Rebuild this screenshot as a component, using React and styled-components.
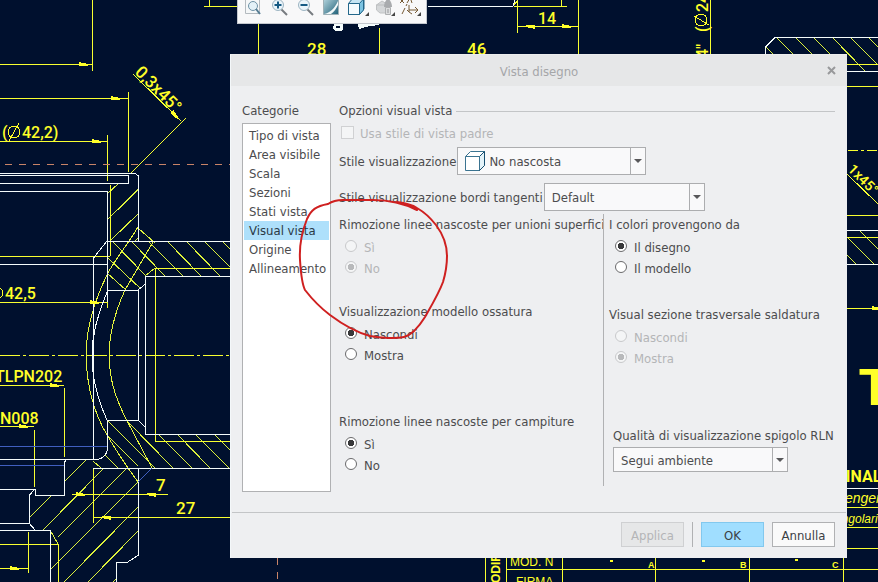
import React, { useState } from "react";
import styled, { createGlobalStyle } from "styled-components";

const GlobalStyle = createGlobalStyle`
  * {
    box-sizing: border-box;
  }
  body {
    margin: 0;
    overflow: hidden;
    background-color: #00102e;
    font-family: "DejaVu Sans Condensed", "Noto Sans", sans-serif;
    font-size: 13px;
    line-height: 20px;
    color: #4c4c4e;
  }
`;

const Page = styled.main`
  position: relative;
  min-height: 100vh;
  padding: 0 31px 24px 230px;
`;

const Sheet = styled.svg`
  position: absolute;
  top: 0;
  left: 0;
  width: 100%;
  height: 100%;
  font-family: Roboto, "Liberation Sans", sans-serif;
  shape-rendering: crispEdges;
`;

const Toolbar = styled.div`
  position: relative;
  display: flex;
  gap: 4px;
  width: max-content;
  height: 24px;
  margin-left: 7px;
  padding: 0 5px;
  background-color: #f8f8f9;
  border: 1px solid #c4c8ce;
  border-top: 0;
`;

const ToolButton = styled.button`
  width: 22px;
  height: 18px;
  padding: 0;
  border: 0;
  background: none;
  svg {
    display: block;
  }
`;

const Dialog = styled.section`
  position: relative;
  margin-top: 30px;
  background-color: #eeeff1;
  border-left: 1px solid #f4f8fa;
  border-top: 1px solid #eceded;
`;

const TitleBar = styled.header`
  display: grid;
  grid-template-columns: 20px 1fr 20px;
  align-items: center;
  height: 31px;
  padding: 0 6px;
  background-color: #e6e7e8;
`;

const Title = styled.h1`
  margin: 0;
  padding-top: 2px;
  font-size: 13px;
  font-weight: 400;
  text-align: center;
  color: #a5a6a8;
`;

const CloseButton = styled.button`
  display: flex;
  justify-content: center;
  padding: 0;
  border: 0;
  background: none;
`;

const Body = styled.div`
  display: flex;
  gap: 8px;
  padding: 15px 12px 20px 11px;
`;

const Categories = styled.div`
  display: flex;
  flex-direction: column;
  flex: none;
  width: 89px;
`;

const CategoryList = styled.ul`
  flex: 1;
  margin: 2px 0 0;
  padding: 2px 1px;
  list-style: none;
  background-color: #fff;
  border: 1px solid #b0b1b3;
`;

const Category = styled.button`
  display: block;
  width: 100%;
  height: 19px;
  padding: 0 0 0 5px;
  border: 0;
  font: inherit;
  line-height: 19px;
  text-align: left;
  white-space: nowrap;
  color: ${(props) => (props.$active ? "#2a3a46" : "#4c4c4e")};
  background-color: ${(props) => (props.$active ? "#aee0fb" : "#fff")};
`;

const Options = styled.div`
  flex: 1;
  min-width: 0;
  padding-bottom: 6px;
`;

const OptionsTitle = styled.h2`
  display: flex;
  align-items: center;
  gap: 4px;
  margin: 0;
  font-size: 13px;
  font-weight: 400;
  &::after {
    content: "";
    flex: 1;
    height: 1px;
    background-color: #c3c5c7;
  }
`;

const CheckRow = styled.label`
  display: flex;
  align-items: center;
  gap: 6px;
  height: 26px;
  padding: 0 0 1px 2px;
  color: #b4b5b7;
`;

const Checkbox = styled.input`
  appearance: none;
  width: 13px;
  height: 13px;
  margin: 0 0 2px;
  border: 1px solid #d0d1d3;
  background-color: #f4f5f6;
`;

const Fields = styled.div`
  display: grid;
  gap: 8px;
  padding-bottom: 3px;
`;

const FieldRow = styled.div`
  display: flex;
  align-items: center;
  gap: 1px;
  white-space: nowrap;
  label {
    padding-top: 2px;
  }
`;

const SelectBox = styled.div`
  position: relative;
  width: ${(props) => props.$width}px;
  height: ${(props) => props.$height || 28}px;
`;

const Select = styled.select`
  appearance: none;
  width: 100%;
  height: 100%;
  padding: 2px 20px 0 ${(props) => (props.$icon ? 31 : 7)}px;
  border: 1px solid #acadaf;
  border-radius: 0;
  font: inherit;
  color: #4c4c4e;
  background-color: #f9f9fa;
`;

const SelectArrow = styled.span`
  position: absolute;
  top: 1px;
  right: 1px;
  bottom: 1px;
  display: flex;
  align-items: center;
  justify-content: center;
  width: 15px;
  border-left: 1px solid #acadaf;
  pointer-events: none;
`;

const SelectIcon = styled.span`
  position: absolute;
  top: 3px;
  left: 7px;
  pointer-events: none;
`;

const Columns = styled.div`
  display: grid;
  grid-template-columns: 264px 1fr;
`;

const Column = styled.div`
  padding-left: ${(props) => (props.$divided ? 5 : 0)}px;
  border-left: ${(props) => (props.$divided ? "1px solid #b0b1b3" : "0")};
  white-space: nowrap;
`;

const Group = styled.fieldset`
  min-width: 0;
  min-height: ${(props) => props.$space}px;
  margin: 0;
  padding: 0;
  border: 0;
`;

const Legend = styled.legend`
  padding: 1px 0;
`;

const RadioRow = styled.label`
  display: flex;
  align-items: center;
  gap: 7px;
  width: max-content;
  height: 21px;
  padding: 2px 0 0 6px;
  color: ${(props) => (props.$disabled ? "#b4b5b7" : "#4c4c4e")};
`;

const Radio = styled.input`
  appearance: none;
  width: 12px;
  height: 12px;
  margin: 0 0 3px;
  border: 1px solid #6a6a6c;
  border-radius: 50%;
  background-color: #fff;
  &:checked {
    background-image: radial-gradient(circle, #38383a 2px, #38383a 3px, #fff 3px);
  }
  &:disabled {
    border-color: #c8c9cb;
    background-color: #f4f5f6;
  }
  &:disabled:checked {
    background-image: radial-gradient(circle, #b8b9bb 2px, #b8b9bb 3px, #f4f5f6 3px);
  }
`;

const QualityField = styled.div`
  display: flex;
  flex-direction: column;
  gap: 1px;
  padding: 1px 0 0 4px;
`;

const Footer = styled.footer`
  display: flex;
  justify-content: flex-end;
  align-items: center;
  gap: 8px;
  margin: 0 1px;
  padding: 9px 11px 11px;
  border-top: 1px solid #c3c5c7;
`;

const Button = styled.button`
  width: 63px;
  height: 25px;
  padding: 2px 0 0;
  border: 1px solid ${(props) => (props.$primary ? "#82c8ee" : "#b0b1b3")};
  font: inherit;
  color: #3c4045;
  background-color: ${(props) => (props.$primary ? "#a0deff" : "#fafafa")};
  &:disabled {
    color: #b4b5b7;
    border-color: #cfd0d2;
    background-color: #e6e7e8;
  }
`;

const Separator = styled.span`
  width: 1px;
  height: 25px;
  background-color: #b0b1b3;
`;

const Markup = styled.svg`
  position: absolute;
  top: 140px;
  left: 63px;
  pointer-events: none;
`;

const categories = [
  "Tipo di vista",
  "Area visibile",
  "Scala",
  "Sezioni",
  "Stati vista",
  "Visual vista",
  "Origine",
  "Allineamento",
];

const Arrow = ({ x, y, flip, angle = 0 }) => (
  <path
    d="M0 0 L-5 -1 L-12 -2.5 V2 L-5 1.5 Z"
    fill="#ffff28"
    transform={`translate(${x} ${y}) rotate(${flip ? 180 : angle})`}
  />
);

const Drawing = () => (
  <Sheet viewBox="0 0 878 582" preserveAspectRatio="xMinYMin slice" aria-hidden="true">
    <rect width="878" height="582" fill="#00102e" />

    {/* section hatching */}
    <path
      fill="none"
      stroke="#dcf03c"
      d="M107 194L118 184M127 200L138 189M108 219L138 190M111 240L138 214M135 241L138 238
        M138 228L155 243M112 241L146 276M131 241L165 276M148 241L183 276M167 241L201 276M186 241L220 276M204 241L230 267M222 241L230 249
        M108 258L141 289M107 273L126 290M145 276L155 268
        M107 420L155 468M127 421L173 468M158 434L192 468M177 434L210 468M195 434L229 468M214 434L230 450M107 435L138 466M105 455L118 468M93 461L101 468
        M64 482L87 459M29 518L51 496M43 530L104 468M58 537L127 468M50 570L138 482M64 582L138 507M88 582L138 531M113 582L117 578M50 530L58 544
        M766 47L773 54M777 38L793 54M795 37L812 54M813 37L830 54M832 37L865 71M850 37L878 65M868 37L878 47
        M847 237L874 264M859 230L878 249M847 255L856 264"
    />
    <path
      fill="none"
      stroke="#e6f53c"
      d="M138 227C126 247 114 261 108 273C94 301 86 330 86 356C87 394 97 418 107 435C118 454 130 471 138 482
        M153 242L125 290C115 312 109 334 109 357C110 384 117 400 125 417L152 468"
    />

    {/* dimension and auxiliary lines */}
    <path
      fill="none"
      stroke="#f8ff30"
      d="M92.500 0V71M0 64.500H92M0 98.500H128M128.500 92V172M0 141.500H107M107.500 135V181M204 6.500H237M209.500 0V6
        M133 74L181 121M186 118L130 174
        M110.500 185V256M0 256.500H110M0 302.500H107M107.500 285V308M155.500 268V441M155 268.500H230M155 441.500H230
        M0 385.500H64M64.500 388V457M0 426.500H34M34.500 430V487M72 494.500H168M93 517.500H230M93.500 468V523
        M0 544.500H58M58.500 544V582M0 568.500H28M28.500 532V573
        M258.500 23V54M379.500 28V54M517.500 0V33M517 26.500H578M578.500 0V54M514 6.500H567M561.500 0V6M513 6L518 0M710.500 0V54
        M847 64.500H878M847 86.500H878M847 174L878 204M847 215.500H878M847 237.500H878M847 308.500H878
        M847 507.500H878M847 527.500H878M847 548.500H878
        M506 569.500H878M485.500 558V582M506.500 558V582M562.500 558V582M655.500 558V582M749.500 558V582M843.500 558V582"
    />
    <path stroke="#f8ff30" strokeDasharray="20 3 3 3" d="M0 355.500H230" />
    <path stroke="#f8ff30" strokeDasharray="10 3 3 3" d="M848 150.500H878" />
    <path stroke="#c98468" strokeDasharray="7 7" fill="none" d="M5 164.500H230M277.500 558V582" />

    {/* part outline */}
    <path
      fill="none"
      stroke="#f4fbfb"
      d="M0 173.500H135L138.500 176V241M0 175.500H128.500V183.500H0M0 191.500H107.500V241
        M107.500 241.500H230M107 241L93.500 258V459M0 264.500H107M107.500 241V302M107 290.500H138.500V420.500H107.500V450Q106 457 98 459.500H0
        M138 290L145.500 284M230 276.500H145.500V434.500H230M138 420L145 427
        M107 292C96 320 92 336 92 356C92 380 98 400 107 420
        M93 468.500H230M138.500 468V555L127 562.500H116.500V582
        M67 459L64.500 462V495.500H35V489.500H0M35 489L29.500 495V523.500H0M29 523L35 530M0 530.500H50.500V582
        M428 6.500H513L515 0M765.500 54V47L775 37.500H878M847 71.500H878M847 230.500H878M847 264.500H878M847 488.500H878"
    />
    <path fill="none" stroke="#405fc0" d="M0 446.500H107M0 465.500H64M152 468L138 482" />

    <Arrow x={91} y={64.5} />
    <Arrow x={123} y={98.5} />
    <Arrow x={104} y={141.5} />
    <Arrow x={180} y={120} angle={45} />
    <Arrow x={102} y={302.5} />
    <Arrow x={62} y={385.5} />
    <Arrow x={31} y={426.5} />
    <Arrow x={88} y={494.5} />
    <Arrow x={144} y={494.5} flip />
    <Arrow x={99} y={517.5} flip />
    <Arrow x={22} y={568.5} />
    <Arrow x={523} y={26.5} flip />
    <Arrow x={574} y={26.5} />
    <Arrow x={884} y={308.5} />
    <path
      fill="#f4fbfb"
      fillRule="evenodd"
      d="M334 23H343V29L341 31H335L333 29ZM336 26V28H340V26ZM358 24H379V25L370 26L359 29Z"
    />

    <g fill="#ffff28" fontSize="16" fontWeight="500">
      <text x="2" y="138">(</text>
      <text x="22" y="138">42,2)</text>
      <text x="5" y="299">42,5</text>
      <text transform="translate(134 73) rotate(45)" fontSize="17">0,3x45°</text>
      <text x="-5" y="382">TLPN202</text>
      <text x="0" y="424">N008</text>
      <text x="156" y="491" fontSize="17">7</text>
      <text x="176" y="514" fontSize="17">27</text>
      <text x="538" y="24">14</text>
      <text x="307" y="55" fontSize="17">28</text>
      <text x="467" y="55" fontSize="17">46</text>
      <text transform="translate(708 32) rotate(-90)">(</text>
      <text transform="translate(708 12) rotate(-90)">24</text>
      <text transform="translate(708 58) rotate(-90)">4"</text>
      <text transform="translate(847 170) rotate(45)" fontSize="14">1x45°</text>
    </g>
    <g fill="none" stroke="#ffff28">
      <circle cx="14" cy="132" r="6" />
      <path d="M9 141L19 123" />
      <circle cx="-2" cy="293" r="5" />
      <circle cx="701" cy="20" r="6" />
      <path d="M694 16L709 25" />
    </g>
    <g fill="#ffff28" fontFamily="Liberation Sans">
      <text x="859" y="405" fontSize="51" fontWeight="700">T</text>
      <text x="837" y="482" fontSize="16" fontWeight="700" fontFamily="Roboto">FINALE</text>
      <text x="841" y="503" fontSize="14" fontStyle="italic">tengen</text>
      <text x="835" y="523" fontSize="12" fontStyle="italic">angolari</text>
      <text x="510" y="566" fontSize="12">MOD. N</text>
      <text x="516" y="586" fontSize="12">FIRMA</text>
      <text transform="translate(500 593) rotate(-90)" fontSize="12" fontWeight="700">MODIF</text>
      <g fontSize="9" fontWeight="700">
        <text x="648" y="568">A</text>
        <text x="740" y="568">B</text>
        <text x="832" y="568">C</text>
      </g>
      <path d="M610 560h3v2h-3zM702 560h3v2h-3zM795 559h3v2h-3z" />
    </g>
  </Sheet>
);

const Cube = ({ width, side }) => (
  <svg width={width} height={width} viewBox="0 0 22 22">
    <path d="M1.500 6.500L6.500 1.500H20.500V15.500L15.500 20.500H1.500Z" fill="#fff" stroke="#3a7390" />
    <path d="M15.500 6.500L20.500 1.500V15.500L15.500 20.500Z" fill={side} stroke="#174f70" />
    <path d="M1.500 6.500H15.500V20" fill="none" stroke="#3a7390" />
  </svg>
);

const Magnifier = ({ sign }) => (
  <svg width="22" height="18" viewBox="0 0 22 18">
    <path d="M12 9L18 15" stroke="#777b80" strokeWidth="2" />
    <circle cx="9" cy="5" r="5.500" fill="#eaf4fa" stroke="#9db4c2" />
    <path d={sign === "+" ? "M5.500 5H12.500M9 1.500V8.500" : "M5.500 5H12.500"} stroke="#165a84" strokeWidth="2" />
  </svg>
);

const DropMark = () => <path d="M22 12V16H18Z" fill="#444" />;

const toolIcons = [
  {
    label: "Adatta",
    icon: (
      <svg width="22" height="18" viewBox="0 0 22 18">
        <path d="M2.500 -4V13.500H16.500V-4" fill="#f5f7f8" stroke="#b4babf" />
        <circle cx="10" cy="6" r="4.500" fill="#e3f1f8" stroke="#6f92a6" />
        <path d="M13 9L17 14" stroke="#557c93" strokeWidth="2" />
      </svg>
    ),
  },
  { label: "Ingrandisci", icon: <Magnifier sign="+" /> },
  { label: "Riduci", icon: <Magnifier sign="-" /> },
  {
    label: "Ridisegna",
    icon: (
      <svg width="22" height="18" viewBox="0 0 22 18">
        <defs>
          <linearGradient id="repaint" x1="0" y1="0" x2="1" y2="1">
            <stop offset="0" stopColor="#b9d8e0" />
            <stop offset="1" stopColor="#1f6078" />
          </linearGradient>
        </defs>
        <path d="M2.500 -2V14.500H17.500V-2Z" fill="url(#repaint)" stroke="#9fb0b6" />
        <path d="M3 14C9 13 14 8 17 1V5C15 9 13 12 10 14Z" fill="#f2f8f9" />
      </svg>
    ),
  },
  {
    label: "Stile visualizzazione",
    icon: (
      <svg width="24" height="18" viewBox="0 0 24 18">
        <path d="M1.500 3.500L6 -2H17V9L12.500 14.500H1.500Z" fill="#c4e4f3" stroke="#23678b" />
        <path d="M1.500 3.500H12.500V14.500H1.500Z" fill="#f4fafd" stroke="#23678b" />
        <path d="M12.500 3.500L16.500 -1V10L12.500 14.500Z" fill="#7cc3e2" stroke="#23678b" />
        <DropMark />
      </svg>
    ),
  },
  {
    label: "Viste",
    icon: (
      <svg width="24" height="18" viewBox="0 0 24 18">
        <path d="M3.500 5L9 1L14 4V13H7L3.500 10Z" fill="#d5d7d9" stroke="#c0c2c4" />
        <path d="M3 5H13" stroke="#bbbdbf" />
        <path d="M12.500 7.500H17.500V14.500H12.500Z" fill="#dcddde" stroke="#aeb0b2" />
        <path d="M11 7C11 3 13 0 15 -2C17 0 19 3 19 7Z" fill="#a9abae" />
        <path d="M14 10H16M14 12H16" stroke="#96989b" />
        <DropMark />
      </svg>
    ),
  },
  {
    label: "Riferimenti",
    icon: (
      <svg width="24" height="18" viewBox="0 0 24 18">
        <path
          d="M1 -1L5 3M5 -1L1 3M8 3L11 -2M3 14L6 8M7 6L8 4M12 0L13 3M10 5V12M10 10H19M16 7L19 10L16 13M8 10L10 12L13 14"
          fill="none"
          stroke="#765a35"
        />
        <DropMark />
      </svg>
    ),
  },
];

const DropDown = ({ id, width, height, icon, options }) => (
  <SelectBox $width={width} $height={height}>
    <Select id={id} $icon={Boolean(icon)}>
      {options.map((option) => (
        <option key={option}>{option}</option>
      ))}
    </Select>
    {icon && <SelectIcon>{icon}</SelectIcon>}
    <SelectArrow>
      <svg width="8" height="4" viewBox="0 0 8 4">
        <path d="M0 0H8L4 4Z" fill="#58585a" />
      </svg>
    </SelectArrow>
  </SelectBox>
);

const RadioGroup = ({ name, title, options, initial, space, disabled }) => {
  const [value, setValue] = useState(initial);

  return (
    <Group $space={space} disabled={disabled}>
      <Legend>{title}</Legend>
      {options.map((option) => (
        <RadioRow key={option} $disabled={disabled}>
          <Radio
            type="radio"
            name={name}
            checked={value === option}
            onChange={() => setValue(option)}
          />
          {option}
        </RadioRow>
      ))}
    </Group>
  );
};

const App = () => {
  const [category, setCategory] = useState("Visual vista");

  return (
    <Page>
      <GlobalStyle />
      <Drawing />
      <Toolbar>
        {toolIcons.map(({ label, icon }) => (
          <ToolButton key={label} type="button" aria-label={label}>
            {icon}
          </ToolButton>
        ))}
      </Toolbar>
      <Dialog role="dialog" aria-labelledby="dialog-title">
        <TitleBar>
          <span />
          <Title id="dialog-title">Vista disegno</Title>
          <CloseButton type="button" aria-label="Chiudi">
            <svg width="9" height="9" viewBox="0 0 9 9">
              <path d="M1 1L8 8M8 1L1 8" stroke="#98999b" strokeWidth="2" />
            </svg>
          </CloseButton>
        </TitleBar>
        <Body>
          <Categories>
            <span>Categorie</span>
            <CategoryList>
              {categories.map((name) => (
                <li key={name}>
                  <Category
                    type="button"
                    $active={name === category}
                    onClick={() => setCategory(name)}
                  >
                    {name}
                  </Category>
                </li>
              ))}
            </CategoryList>
          </Categories>
          <Options>
            <OptionsTitle>Opzioni visual vista</OptionsTitle>
            <CheckRow>
              <Checkbox type="checkbox" disabled />
              Usa stile di vista padre
            </CheckRow>
            <Fields>
              <FieldRow>
                <label htmlFor="style">Stile visualizzazione</label>
                <DropDown
                  id="style"
                  width={189}
                  icon={<Cube width={22} side="#e4f3f9" />}
                  options={["No nascosta", "Wireframe", "Ombreggiatura"]}
                />
              </FieldRow>
              <FieldRow>
                <label htmlFor="edges">Stile visualizzazione bordi tangenti</label>
                <DropDown id="edges" width={161} options={["Default", "Nessuno", "Pieno"]} />
              </FieldRow>
            </Fields>
            <Columns>
              <Column>
                <RadioGroup
                  name="quilts"
                  title="Rimozione linee nascoste per unioni superfici"
                  options={["Sì", "No"]}
                  initial="No"
                  space={87}
                  disabled
                />
                <RadioGroup
                  name="skeleton"
                  title="Visualizzazione modello ossatura"
                  options={["Nascondi", "Mostra"]}
                  initial="Nascondi"
                  space={110}
                />
                <RadioGroup
                  name="hatch"
                  title="Rimozione linee nascoste per campiture"
                  options={["Sì", "No"]}
                  initial="Sì"
                  space={75}
                />
              </Column>
              <Column $divided>
                <RadioGroup
                  name="colors"
                  title="I colori provengono da"
                  options={["Il disegno", "Il modello"]}
                  initial="Il disegno"
                  space={90}
                />
                <RadioGroup
                  name="weld"
                  title="Visual sezione trasversale saldatura"
                  options={["Nascondi", "Mostra"]}
                  initial="Mostra"
                  space={121}
                  disabled
                />
                <QualityField>
                  <label htmlFor="quality">Qualità di visualizzazione spigolo RLN</label>
                  <DropDown
                    id="quality"
                    width={175}
                    height={25}
                    options={["Segui ambiente", "Alta", "Bassa"]}
                  />
                </QualityField>
              </Column>
            </Columns>
          </Options>
        </Body>
        <Footer>
          <Button type="button" disabled>
            Applica
          </Button>
          <Separator />
          <Button type="button" $primary>
            OK
          </Button>
          <Button type="button">Annulla</Button>
        </Footer>
        <Markup width="160" height="150" viewBox="294 195 160 150">
          <path
            fill="none"
            stroke="#cf2020"
            strokeWidth="2"
            strokeLinecap="round"
            d="M417 210C403 203 390 200 373 200H343C336 200 331 202 328 204C316 206 311 210 307 219C303 229 299 243 300 260C301 276 302 284 305 290C312 299 322 309 330 315C342 324 355 332 370 336C380 338 396 339 404 337C412 335 420 325 425 317C433 303 439 293 443 282C446 272 447 265 447 256C447 245 442 233 436 225C429 216 424 212 417 208C411 204 405 203 397 202"
          />
        </Markup>
      </Dialog>
    </Page>
  );
};

export default App;
